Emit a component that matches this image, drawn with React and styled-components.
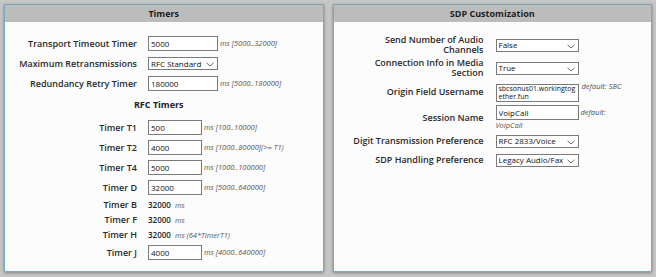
import React from "react";
import styled, { createGlobalStyle } from "styled-components";

const GlobalStyle = createGlobalStyle`
  html, body {
    margin: 0;
    background: #c6c6c6;
  }
  body {
    font-family: "Open Sans", "Liberation Sans", sans-serif;
    color: #222;
  }
`;

const Page = styled.div`
  display: flex;
  gap: 9px;
  padding: 4px;
  width: 656px;
  height: 277px;
  box-sizing: border-box;
`;

const Panel = styled.section`
  width: 320px;
  height: 268px;
  box-sizing: border-box;
  border: 1px solid #7aa8ba;
  background: #fcfcfc;
  box-shadow: 0 1px 3px rgba(0, 0, 0, 0.35);
  display: flex;
  flex-direction: column;
`;

const PanelHeader = styled.h2`
  margin: 0;
  height: 17px;
  line-height: 17px;
  background: #bcbcbc;
  font-size: 9px;
  font-weight: 700;
  text-align: center;
  color: #1e1e1e;
`;

const TimerBody = styled.div`
  padding-top: 11px;
  display: flex;
  flex-direction: column;
`;

const Row = styled.div`
  display: grid;
  grid-template-columns: 132px 1fr;
  column-gap: 11px;
  align-items: center;
  height: ${(p) => (p.$compact ? 15 : 20)}px;
`;

const Label = styled.label`
  font-size: 9px;
  font-weight: 600;
  text-align: right;
  white-space: nowrap;
  color: #2a2a2a;
`;

const Control = styled.div`
  display: flex;
  align-items: center;
  gap: 2px;
`;

const TextInput = styled.input`
  width: ${(p) => p.$w}px;
  height: 15px;
  box-sizing: border-box;
  border: 1px solid #7a7a7a;
  background: #fff;
  padding: 0 2px;
  margin: 0;
  font-family: inherit;
  font-size: 8px;
  color: #111;
  vertical-align: middle;
  outline: none;
`;

const Hint = styled.span`
  font-size: 7.5px;
  font-style: italic;
  color: #555;
  white-space: nowrap;
`;

const Value = styled.span`
  font-size: 8px;
  font-weight: 600;
  margin-right: 2px;
`;

const SubHeading = styled.h3`
  margin: 0;
  height: 24px;
  line-height: 24px;
  font-size: 9px;
  font-weight: 700;
  text-align: center;
  padding-right: 10px;
`;

const SelectBox = styled.div`
  display: flex;
  align-items: center;
  width: ${(p) => p.$w}px;
  height: 13px;
  box-sizing: border-box;
  border: 1px solid #7a7a7a;
  background: #fff;
  padding: 0 3px 0 2px;
  font-size: 8px;
  color: #111;

  span {
    flex: 1;
    overflow: hidden;
    white-space: nowrap;
  }

  svg {
    flex: none;
    margin-top: 3px;
    margin-left: 1px;
  }
`;

const SdpBody = styled.div`
  padding-top: 13px;
  display: grid;
  grid-template-columns: 150px 130px;
  column-gap: 12px;
  row-gap: 3px;
  grid-auto-rows: minmax(16px, auto);
  align-items: center;
`;

const SdpLabel = styled.label`
  justify-self: end;
  max-width: 132px;
  text-align: right;
  font-size: 9px;
  font-weight: 600;
  line-height: 10px;
  color: #2a2a2a;
`;

const SdpValue = styled.div`
  font-size: 7.5px;
  line-height: 10px;

  ${Hint} {
    white-space: normal;
  }
`;

const NameArea = styled.textarea`
  display: block;
  width: 83px;
  height: 18px;
  box-sizing: border-box;
  margin: 3px 3px 0 0;
  padding: 0 2px;
  border: 1px solid #7a7a7a;
  font-family: inherit;
  font-size: 7px;
  line-height: 7.5px;
  resize: none;
  overflow: hidden;
  word-break: break-all;
  color: #111;
  float: left;
  outline: none;
`;

const Chevron = () => (
  <svg width="8" height="5" viewBox="0 0 8 5">
    <path d="M0.5 0.8 L4 4 L7.5 0.8" fill="none" stroke="#555" strokeWidth="0.9" />
  </svg>
);

const Select = ({ w, children }) => (
  <SelectBox $w={w}>
    <span>{children}</span>
    <Chevron />
  </SelectBox>
);

const rfcInputs = [
  ["Timer T1", "500", "ms [100..10000]"],
  ["Timer T2", "4000", "ms [1000..80000](>= T1)"],
  ["Timer T4", "5000", "ms [1000..100000]"],
  ["Timer D", "32000", "ms [5000..640000]"],
];

const rfcValues = [
  ["Timer B", "32000", "ms"],
  ["Timer F", "32000", "ms"],
  ["Timer H", "32000", "ms (64*TimerT1)"],
];

export default function App() {
  return (
    <>
      <GlobalStyle />
      <Page>
        <Panel>
          <PanelHeader>Timers</PanelHeader>
          <TimerBody>
            <Row>
              <Label>Transport Timeout Timer</Label>
              <Control>
                <TextInput $w={70} defaultValue="5000" />
                <Hint>ms [5000..32000]</Hint>
              </Control>
            </Row>
            <Row>
              <Label>Maximum Retransmissions</Label>
              <Control>
                <Select w={70}>RFC Standard</Select>
              </Control>
            </Row>
            <Row>
              <Label>Redundancy Retry Timer</Label>
              <Control>
                <TextInput $w={70} defaultValue="180000" />
                <Hint>ms [5000..180000]</Hint>
              </Control>
            </Row>
            <SubHeading>RFC Timers</SubHeading>
            {rfcInputs.map(([label, value, hint]) => (
              <Row key={label}>
                <Label>{label}</Label>
                <Control>
                  <TextInput $w={54} defaultValue={value} />
                  <Hint>{hint}</Hint>
                </Control>
              </Row>
            ))}
            {rfcValues.map(([label, value, hint]) => (
              <Row key={label} $compact>
                <Label>{label}</Label>
                <Control>
                  <Value>{value}</Value>
                  <Hint>{hint}</Hint>
                </Control>
              </Row>
            ))}
            <Row>
              <Label>Timer J</Label>
              <Control>
                <TextInput $w={54} defaultValue="4000" />
                <Hint>ms [4000..640000]</Hint>
              </Control>
            </Row>
          </TimerBody>
        </Panel>

        <Panel>
          <PanelHeader>SDP Customization</PanelHeader>
          <SdpBody>
            <SdpLabel>Send Number of Audio Channels</SdpLabel>
            <SdpValue>
              <Select w={83}>False</Select>
            </SdpValue>

            <SdpLabel>Connection Info in Media Section</SdpLabel>
            <SdpValue>
              <Select w={83}>True</Select>
            </SdpValue>

            <SdpLabel>Origin Field Username</SdpLabel>
            <SdpValue>
              <NameArea defaultValue="sbcsonus01.workingtogether.fun" />
              <Hint>default: SBC</Hint>
            </SdpValue>

            <SdpLabel>Session Name</SdpLabel>
            <SdpValue>
              <TextInput $w={83} defaultValue="VoipCall" /> <Hint>default: VoipCall</Hint>
            </SdpValue>

            <SdpLabel>Digit Transmission Preference</SdpLabel>
            <SdpValue>
              <Select w={83}>RFC 2833/Voice</Select>
            </SdpValue>

            <SdpLabel>SDP Handling Preference</SdpLabel>
            <SdpValue>
              <Select w={83}>Legacy Audio/Fax</Select>
            </SdpValue>
          </SdpBody>
        </Panel>
      </Page>
    </>
  );
}
